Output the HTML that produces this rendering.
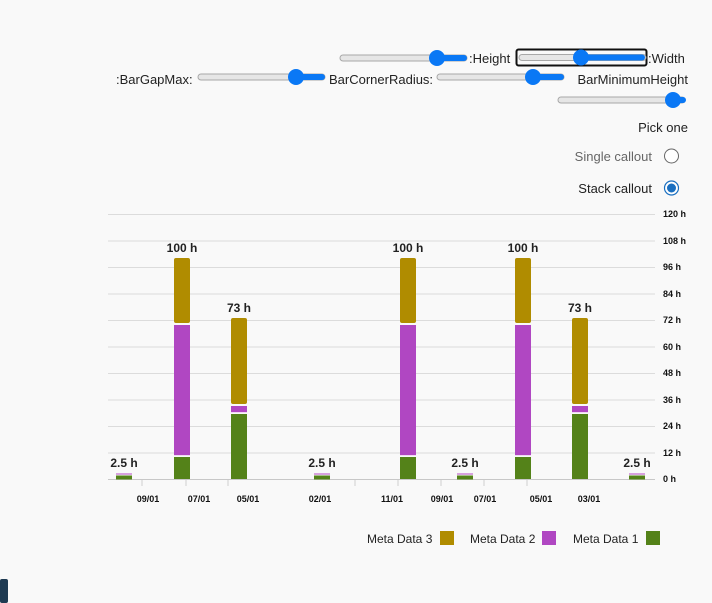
<!DOCTYPE html>
<html><head><meta charset="utf-8"><style>
html,body{margin:0;padding:0;background:#f9f9f9;width:712px;height:603px;overflow:hidden}
svg{display:block;font-family:"Liberation Sans",sans-serif}
</style></head><body>
<svg width="712" height="603" viewBox="0 0 712 603">
<defs>
<g id="trk"><rect x="0" y="-3" width="127" height="6" rx="3" fill="#e6e6e6" stroke="#a8a8a8" stroke-width="1"/></g>
</defs>
<g font-size="13" fill="#222">
<use href="#trk" x="340" y="58"/><rect x="437" y="55" width="30" height="6" rx="3" fill="#0a78f5"/><circle cx="437" cy="58" r="8" fill="#0a78f5"/>
<text x="469" y="63">:Height</text>
<rect x="516.5" y="49.5" width="130" height="16" rx="2" fill="none" stroke="#111" stroke-width="2"/>
<use href="#trk" x="519" y="57.5"/><rect x="581" y="54.5" width="64" height="6" rx="3" fill="#0a78f5"/><circle cx="581" cy="57.5" r="8" fill="#0a78f5"/>
<text x="648" y="63">:Width</text>
<text x="116" y="84">:BarGapMax:</text>
<use href="#trk" x="198" y="77"/><rect x="296" y="74" width="29" height="6" rx="3" fill="#0a78f5"/><circle cx="296" cy="77" r="8" fill="#0a78f5"/>
<text x="329" y="84">BarCornerRadius:</text>
<use href="#trk" x="437" y="77"/><rect x="533" y="74" width="31" height="6" rx="3" fill="#0a78f5"/><circle cx="533" cy="77" r="8" fill="#0a78f5"/>
<text x="688" y="84" text-anchor="end">BarMinimumHeight</text>
<use href="#trk" x="558" y="100"/><rect x="673" y="97" width="13" height="6" rx="3" fill="#0a78f5"/><circle cx="673" cy="100" r="8" fill="#0a78f5"/>
<text x="688" y="132" text-anchor="end">Pick one</text>
<text x="652" y="161" text-anchor="end" fill="#666">Single callout</text>
<circle cx="671.5" cy="156" r="7" fill="#fff" stroke="#666" stroke-width="1"/>
<text x="652" y="193" text-anchor="end">Stack callout</text>
<circle cx="671.5" cy="188" r="7" fill="#fff" stroke="#1a6fc0" stroke-width="1.2"/>
<circle cx="671.5" cy="188" r="4.5" fill="#1a6fc0"/>
</g>
<g stroke="#dcdcdc" stroke-width="1">
<line x1="108" x2="655" y1="214.5" y2="214.5"/><line x1="108" x2="655" y1="241" y2="241"/>
<line x1="108" x2="655" y1="267.5" y2="267.5"/><line x1="108" x2="655" y1="294" y2="294"/>
<line x1="108" x2="655" y1="320.5" y2="320.5"/><line x1="108" x2="655" y1="347" y2="347"/>
<line x1="108" x2="655" y1="373.5" y2="373.5"/><line x1="108" x2="655" y1="400" y2="400"/>
<line x1="108" x2="655" y1="426.5" y2="426.5"/><line x1="108" x2="655" y1="453" y2="453"/>
<line x1="108" x2="655" y1="479.5" y2="479.5" stroke="#c8c8c8"/>
</g>
<g stroke="#dcdcdc" stroke-width="1.5">
<line x1="142" x2="142" y1="480" y2="486"/><line x1="186" x2="186" y1="480" y2="486"/><line x1="228" x2="228" y1="480" y2="486"/>
<line x1="355" x2="355" y1="480" y2="486"/><line x1="398" x2="398" y1="480" y2="486"/><line x1="441" x2="441" y1="480" y2="486"/>
<line x1="484" x2="484" y1="480" y2="486"/><line x1="527" x2="527" y1="480" y2="486"/>
</g>
<g font-size="9" fill="#111" font-weight="bold">
<text x="663" y="217">120 h</text><text x="663" y="244">108 h</text><text x="663" y="270">96 h</text>
<text x="663" y="297">84 h</text><text x="663" y="323">72 h</text><text x="663" y="350">60 h</text>
<text x="663" y="376">48 h</text><text x="663" y="403">36 h</text><text x="663" y="429">24 h</text>
<text x="663" y="456">12 h</text><text x="663" y="482">0 h</text>
</g>
<g font-size="9" fill="#111" text-anchor="middle" font-weight="bold">
<text x="148" y="502">09/01</text><text x="199" y="502">07/01</text><text x="248" y="502">05/01</text>
<text x="320" y="502">02/01</text><text x="392" y="502">11/01</text><text x="442" y="502">09/01</text>
<text x="485" y="502">07/01</text><text x="541" y="502">05/01</text><text x="589" y="502">03/01</text>
</g>
<g>
<g id="sm"><rect x="116" y="473" width="16" height="2" fill="#d8a0df"/><rect x="116" y="475.5" width="16" height="4" fill="#548219"/></g>
<use href="#sm" x="198"/><use href="#sm" x="341"/><use href="#sm" x="513"/>
<g id="big"><rect x="174" y="258" width="16" height="65" rx="2" fill="#b08c00"/><rect x="174" y="325" width="16" height="130" fill="#b047c2"/><rect x="174" y="455" width="16" height="1" fill="#f0d8f3"/><rect x="174" y="457" width="16" height="22" fill="#548219"/></g>
<use href="#big" x="226"/><use href="#big" x="341"/>
<g id="mid"><rect x="231" y="318" width="16" height="86" rx="2" fill="#b08c00"/><rect x="231" y="406" width="16" height="6" fill="#b047c2"/><rect x="231" y="412" width="16" height="1" fill="#f0d8f3"/><rect x="231" y="414" width="16" height="65" fill="#548219"/></g>
<use href="#mid" x="341"/>
</g>
<g font-size="12" fill="#222" text-anchor="middle" font-weight="bold">
<text x="124" y="467">2.5 h</text><text x="182" y="252">100 h</text><text x="239" y="312">73 h</text>
<text x="322" y="467">2.5 h</text><text x="408" y="252">100 h</text><text x="465" y="467">2.5 h</text>
<text x="523" y="252">100 h</text><text x="580" y="312">73 h</text><text x="637" y="467">2.5 h</text>
</g>
<g font-size="12" fill="#222">
<text x="367" y="543">Meta Data 3</text><rect x="440" y="531" width="14" height="14" fill="#b08c00"/>
<text x="470" y="543">Meta Data 2</text><rect x="542" y="531" width="14" height="14" fill="#b047c2"/>
<text x="573" y="543">Meta Data 1</text><rect x="646" y="531" width="14" height="14" fill="#548219"/>
</g>
<rect x="0" y="579" width="8" height="24" rx="2" fill="#1e3a52"/>
</svg>
</body></html>
